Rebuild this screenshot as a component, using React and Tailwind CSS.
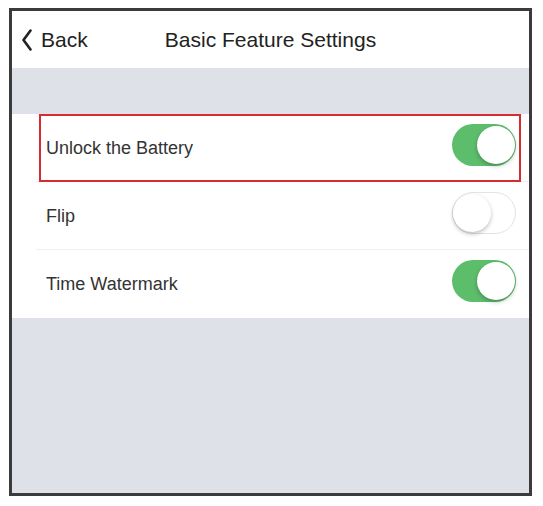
import { useState } from "react";

const Toggle = ({ on, onChange }) => (
  <button
    onClick={onChange}
    className={`relative h-[42px] w-[64px] shrink-0 rounded-full transition-colors ${
      on ? "bg-[#5cbd6b]" : "border border-[#e3e3e3] bg-white"
    }`}
  >
    <span
      className={`absolute top-1/2 h-[38px] w-[38px] -translate-y-1/2 rounded-full bg-white shadow-[0_2px_4px_rgba(0,0,0,0.25)] ${
        on ? "right-[1px]" : "left-0"
      }`}
    />
  </button>
);

const Row = ({ label, on, onChange, highlight, last }) => (
  <div className="relative flex h-[68px] items-center">
    <span className="pl-[34px] text-[18px] text-[#333]">{label}</span>
    <div className="ml-auto pr-[13px]">
      <Toggle on={on} onChange={onChange} />
    </div>
    {!last && (
      <div className="absolute bottom-0 left-[24px] right-0 h-px bg-[#f0f0f2]" />
    )}
    {/* red highlight frame drawn over the row */}
    {highlight && (
      <div className="pointer-events-none absolute bottom-0 left-[27px] right-[8px] top-0 border-2 border-[#d52b31]" />
    )}
  </div>
);

const App = () => {
  const [settings, setSettings] = useState({
    battery: true,
    flip: false,
    watermark: true,
  });

  const toggle = (key) => setSettings({ ...settings, [key]: !settings[key] });

  return (
    <div className="h-[506px] w-[543px] bg-white pl-[9px] pt-[8px] font-['Liberation_Sans',Arial,sans-serif]">
      <div className="flex h-[488px] w-[523px] flex-col border-[3px] border-[#3b3b3d] bg-[#dfe1e8]">
        {/* Header */}
        <div className="relative flex h-[57px] items-center justify-center bg-white">
          <button className="absolute left-[10px] flex items-center gap-[9px] text-[21px] text-[#222]">
            <svg width="10" height="22" viewBox="0 0 10 22" fill="none">
              <path
                d="M8.5 1.5 L1.5 11 L8.5 20.5"
                stroke="#222"
                strokeWidth="2.6"
                strokeLinecap="round"
                strokeLinejoin="round"
              />
            </svg>
            Back
          </button>
          <h1 className="text-[21px] text-[#222]">Basic Feature Settings</h1>
        </div>

        <div className="h-[46px]" />

        <div className="bg-white">
          <Row
            label="Unlock the Battery"
            on={settings.battery}
            onChange={() => toggle("battery")}
            highlight
          />
          <Row
            label="Flip"
            on={settings.flip}
            onChange={() => toggle("flip")}
          />
          <Row
            label="Time Watermark"
            on={settings.watermark}
            onChange={() => toggle("watermark")}
            last
          />
        </div>
      </div>
    </div>
  );
};

export default App;
